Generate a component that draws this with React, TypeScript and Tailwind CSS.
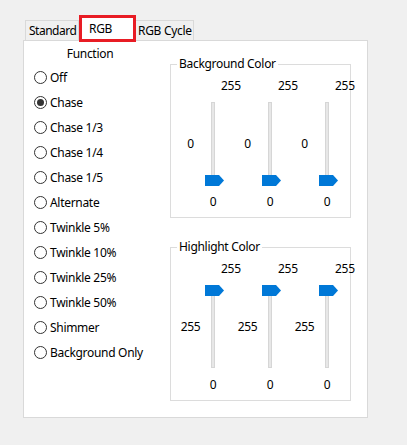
import React from "react";

const functions = [
  "Off",
  "Chase",
  "Chase 1/3",
  "Chase 1/4",
  "Chase 1/5",
  "Alternate",
  "Twinkle 5%",
  "Twinkle 10%",
  "Twinkle 25%",
  "Twinkle 50%",
  "Shimmer",
  "Background Only",
];

const Radio = ({ label, checked }: { label: string; checked?: boolean }) => (
  <div className="flex items-center h-[25px]">
    <span className="w-[13px] h-[13px] rounded-full border border-[#333333] bg-white flex items-center justify-center shrink-0">
      {checked && <span className="w-[7px] h-[7px] rounded-full bg-[#333333]" />}
    </span>
    <span className="ml-[3px] whitespace-nowrap">{label}</span>
  </div>
);

const Slider = ({ atTop }: { atTop: boolean }) => (
  <div className="relative w-[20px] h-[84px]">
    {/* track */}
    <div
      className={`absolute left-[6px] w-[4px] bg-[#e7e7e7] border border-[#d6d6d6] ${
        atTop ? "top-[3px] bottom-[1px]" : "top-0 bottom-[9px]"
      }`}
    />
    {/* thumb */}
    <svg
      className={`absolute left-0 ${atTop ? "top-0" : "bottom-0"}`}
      width="20"
      height="11"
      viewBox="0 0 20 11"
    >
      <polygon points="0,0 14,0 19,5.5 14,11 0,11" fill="#0078d7" />
    </svg>
  </div>
);

const Channel = ({ mid, atTop }: { mid: string; atTop: boolean }) => (
  <div className="w-[57px] flex flex-col shrink-0">
    <div className="h-[16px] pl-[45px] whitespace-nowrap">255</div>
    <div className="mt-[8px] flex items-center">
      <div className="w-[29px] text-center">{mid}</div>
      <Slider atTop={atTop} />
    </div>
    <div className="mt-[8px] ml-[29px] w-[16px] h-[16px] text-center">0</div>
  </div>
);

const ColorGroup = ({ title, mid, atTop }: { title: string; mid: string; atTop: boolean }) => (
  <fieldset className="w-[181px] border border-[#dcdcdc] pl-[5px] pt-[6px] pb-[7px]">
    <legend className="ml-[1px] px-[2px] h-[16px]">{title}</legend>
    <div className="flex">
      <Channel mid={mid} atTop={atTop} />
      <Channel mid={mid} atTop={atTop} />
      <Channel mid={mid} atTop={atTop} />
    </div>
  </fieldset>
);

export default function App() {
  return (
    <div className="w-[407px] h-[445px] bg-[#f0f0f0] pt-[15px] pl-[23px] text-[12px] leading-[16px] tracking-[-0.3px] text-black font-['Noto_Sans',sans-serif] overflow-hidden">
      {/* Tabs */}
      <div className="flex items-end h-[25px] ml-[2px]">
        <div className="w-[54px] h-[20px] border border-b-0 border-[#d9d9d9] bg-[#f0f0f0] pl-[3px] flex items-center whitespace-nowrap tracking-[-0.5px]">
          Standard
        </div>
        <div className="relative z-10 w-[57px] h-[27px] -mb-[2px] border-[3px] border-[#e81c24] bg-white pl-[7px] pt-[3px]">
          RGB
        </div>
        <div className="w-[58px] h-[20px] border border-b-0 border-l-0 border-[#d9d9d9] bg-[#f0f0f0] pl-[2px] flex items-center whitespace-nowrap">
          RGB Cycle
        </div>
      </div>

      {/* Panel */}
      <div className="w-[345px] h-[378px] border border-[#d9d9d9] bg-white flex">
        <div className="w-[132px] pt-[5px]">
          <div className="text-center h-[16px]">Function</div>
          <div className="pl-[10px] mt-[3px]">
            {functions.map((f) => (
              <Radio key={f} label={f} checked={f === "Chase"} />
            ))}
          </div>
        </div>
        <div className="ml-[14px] pt-[15px] flex flex-col gap-[21px]">
          <ColorGroup title="Background Color" mid="0" atTop={false} />
          <ColorGroup title="Highlight Color" mid="255" atTop={true} />
        </div>
      </div>
    </div>
  );
}
